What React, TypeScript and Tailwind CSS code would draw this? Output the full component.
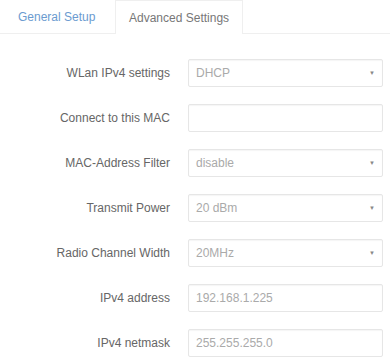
type Row = {
  label: string
  value: string
  select?: boolean
}

const rows: Row[] = [
  { label: "WLan IPv4 settings", value: "DHCP", select: true },
  { label: "Connect to this MAC", value: "" },
  { label: "MAC-Address Filter", value: "disable", select: true },
  { label: "Transmit Power", value: "20 dBm", select: true },
  { label: "Radio Channel Width", value: "20MHz", select: true },
  { label: "IPv4 address", value: "192.168.1.225" },
  { label: "IPv4 netmask", value: "255.255.255.0" },
]

export default function App() {
  return (
    <div className="h-[362px] w-[390px] overflow-hidden bg-white font-['Liberation_Sans',Arial,sans-serif] text-[12px]">
      {/* tabs */}
      <div className="flex h-[34px] border-b border-[#efefef]">
        <div className="flex w-[115px] items-center pl-[18px] text-[#6b9bd0]">General Setup</div>
        <div className="-mb-px flex w-[128px] items-center border border-b-0 border-[#efefef] bg-white pl-[13px] text-[#777]">
          Advanced Settings
        </div>
      </div>

      {/* form */}
      <div className="flex flex-col gap-[17px] pt-[25px]">
        {rows.map((row) => (
          <div key={row.label} className="flex h-[28px] items-center">
            <div className="w-[170px] text-right text-[#666]">{row.label}</div>
            <div className="ml-[18px] flex h-[28px] w-[195px] items-center justify-between rounded-[2px] border border-[#e6e6e6] pl-[7px] pr-[7px] text-[#aaa] shadow-[inset_0_1px_1px_rgba(0,0,0,0.04)]">
              <span>{row.value}</span>
              {row.select && <span className="text-[6px] text-[#888]">▼</span>}
            </div>
          </div>
        ))}
      </div>
    </div>
  )
}
